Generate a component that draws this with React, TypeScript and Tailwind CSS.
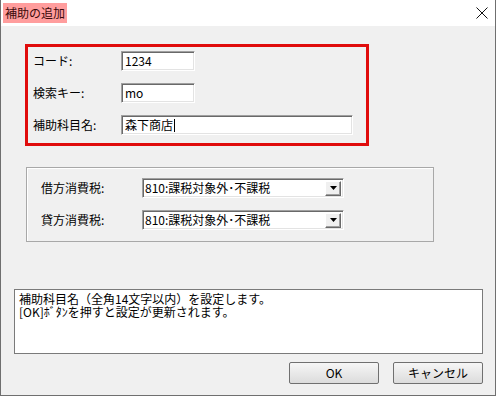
const font = { fontFamily: '"Noto Sans CJK JP", "Noto Sans", sans-serif' };

const sunken =
  "border border-t-[#a0a0a0] border-l-[#a0a0a0] border-b-[#ffffff] border-r-[#ffffff] shadow-[inset_1px_1px_0_#696969,inset_-1px_-1px_0_#e3e3e3] bg-white";

function TextBox({ value, width, caret }: { value: string; width: string; caret?: boolean }) {
  return (
    <div className={`${sunken} ${width} h-[20px] flex items-center pl-[3px] text-[12px] leading-none text-black`}>
      <span>{value}</span>
      {caret && <span className="ml-[1px] inline-block w-px h-[13px] bg-black" />}
    </div>
  );
}

function Combo({ value }: { value: string }) {
  return (
    <div className={`${sunken} w-[202px] h-[20px] flex items-center justify-between pl-[2px] pr-[2px]`}>
      <span className="text-[12px] leading-none text-black">{value}</span>
      <div className="w-[16px] h-[15px] flex items-center justify-center bg-[#f0f0f0] border border-t-white border-l-white border-b-[#696969] border-r-[#696969] shadow-[inset_-1px_-1px_0_#a0a0a0]">
        <svg width="7" height="4" viewBox="0 0 7 4">
          <path d="M0 0h7L3.5 4z" fill="#000" />
        </svg>
      </div>
    </div>
  );
}

function Button({ label }: { label: string }) {
  return (
    <button
      type="button"
      className="h-[22px] w-[90px] rounded-[2px] border border-[#707070] bg-gradient-to-b from-[#f6f6f6] to-[#dcdcdc] text-[12px] leading-none text-black"
    >
      {label}
    </button>
  );
}

export default function App() {
  return (
    <div
      style={font}
      className="w-[496px] h-[396px] flex flex-col bg-[#f0f0f0] border-l border-r border-b border-[#6f6f6f] overflow-hidden"
    >
      <div className="h-[26px] shrink-0 bg-white flex items-center justify-between">
        <div className="ml-[2px] h-[20px] px-[2px] flex items-center bg-[#ff9d9d] text-[12px] leading-none text-[#3a0a0a]">
          補助の追加
        </div>
        <svg width="12" height="12" viewBox="0 0 12 12" className="mr-[7px]">
          <path d="M0.5 0.5l11 11M11.5 0.5l-11 11" stroke="#111" strokeWidth="1" />
        </svg>
      </div>

      <div className="flex-1 flex flex-col text-black">
        <div className="mt-[18px] ml-[24px] w-[344px] h-[102px] border-[3px] border-[#e00c0c] pt-[4px] pl-[5px] flex flex-col gap-[12px]">
          <div className="flex items-center text-[12px] leading-none">
            <span className="w-[88px]">コード:</span>
            <TextBox value="1234" width="w-[74px]" />
          </div>
          <div className="flex items-center text-[12px] leading-none">
            <span className="w-[88px]">検索キー:</span>
            <TextBox value="mo" width="w-[74px]" />
          </div>
          <div className="flex items-center text-[12px] leading-none">
            <span className="w-[88px]">補助科目名:</span>
            <TextBox value="森下商店" width="w-[232px]" caret />
          </div>
        </div>

        <div className="mt-[21px] ml-[25px] w-[408px] h-[75px] border border-[#a8a8a8] shadow-[inset_1px_1px_0_#ffffff] pt-[10px] pl-[14px] flex flex-col gap-[12px]">
          <div className="flex items-center text-[12px] leading-none">
            <span className="w-[101px]">借方消費税:</span>
            <Combo value="810:課税対象外･不課税" />
          </div>
          <div className="flex items-center text-[12px] leading-none">
            <span className="w-[101px]">貸方消費税:</span>
            <Combo value="810:課税対象外･不課税" />
          </div>
        </div>

        <div className="mt-[47px] ml-[13px] w-[469px] h-[65px] border border-[#7a7a7a] bg-white px-[4px] pt-[2px] text-[12px] leading-[13px]">
          <div>補助科目名（全角14文字以内）を設定します。</div>
          <div>[OK]ﾎﾞﾀﾝを押すと設定が更新されます。</div>
        </div>

        <div className="mt-[8px] mr-[12px] flex justify-end gap-[14px]">
          <Button label="OK" />
          <Button label="キャンセル" />
        </div>
      </div>
    </div>
  );
}
